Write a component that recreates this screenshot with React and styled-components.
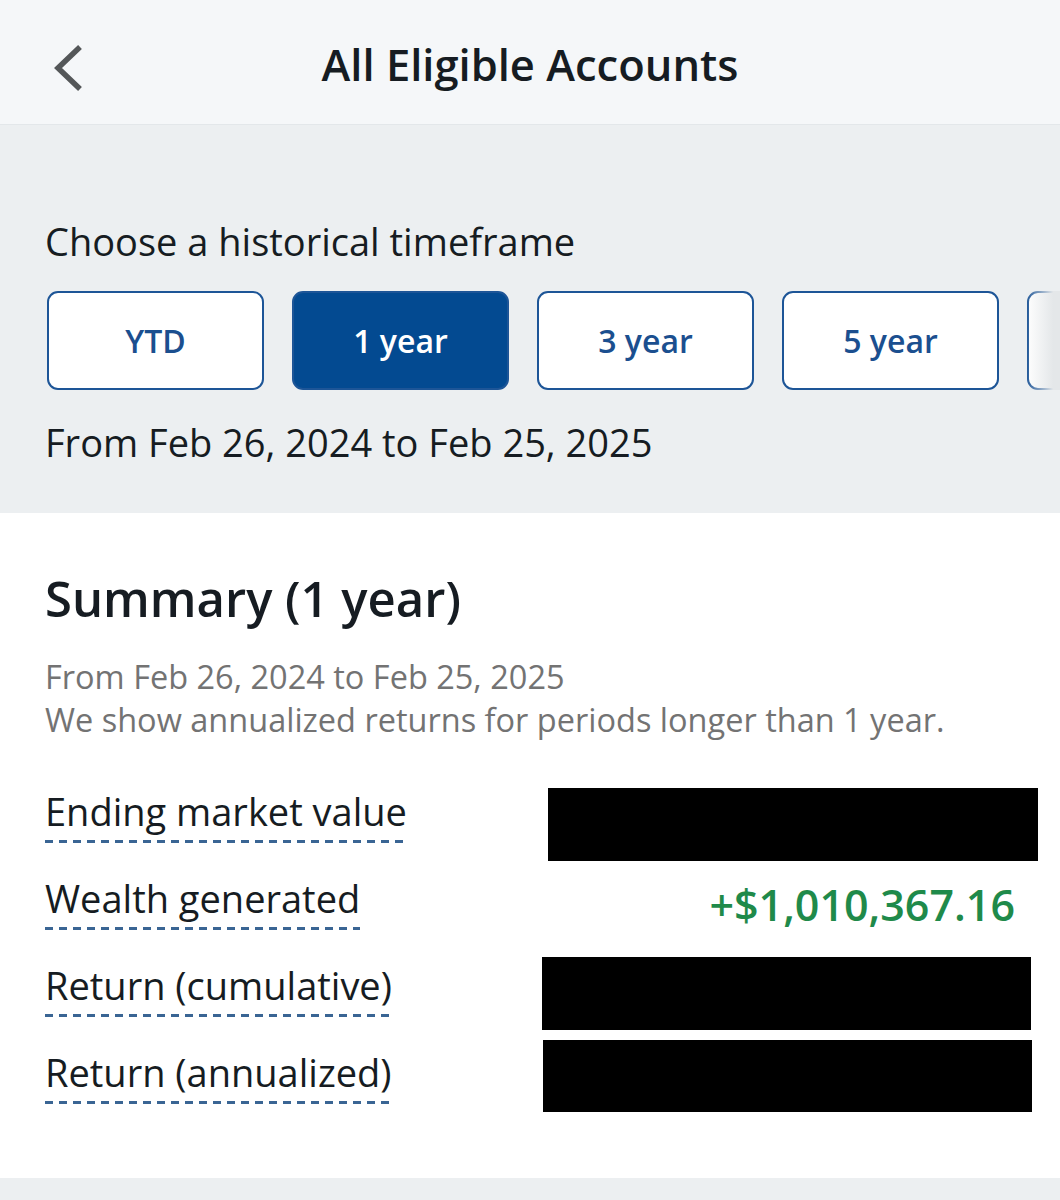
import React, { useState } from "react";
import styled, { createGlobalStyle } from "styled-components";

const GlobalStyle = createGlobalStyle`
  html, body {
    margin: 0;
    padding: 0;
    background: #eceff1;
    font-family: "Open Sans", "Noto Sans", sans-serif;
    color: #161c22;
  }
`;

// STYLED COMPONENTS
const Page = styled.div`
  width: 1060px;
  min-height: 1200px;
  background: #eceff1;
`;
const Header = styled.header`
  height: 125px;
  background: #f5f7f9;
  display: flex;
  align-items: center;
  justify-content: center;
  position: relative;
  border-bottom: 1px solid #e3e7ea;
  box-sizing: border-box;
`;
const BackButton = styled.button`
  position: absolute;
  left: 44px;
  top: 38px;
  width: 48px;
  height: 60px;
  border: none;
  background: none;
  padding: 0;
  cursor: pointer;
`;
const HeaderTitle = styled.h1`
  margin: 0;
  font-size: 43.5px;
  font-weight: 600;
  color: #161c22;
  transform: translateY(2px);
`;
const TimeframePanel = styled.section`
  padding: 92px 0 41px 45px;
`;
const Prompt = styled.p`
  margin: 0 0 26px;
  font-size: 38px;
  line-height: 48px;
  color: #161c22;
`;
const Scroller = styled.div`
  position: relative;
  overflow: hidden;
  margin-left: 2px;
`;
const Fade = styled.div`
  position: absolute;
  right: 0;
  top: 0;
  bottom: 0;
  width: 34px;
  background: linear-gradient(to right, rgba(236, 239, 241, 0), #e4e7e9 80%);
`;
const Pills = styled.div`
  display: flex;
  gap: 28px;
`;
const Pill = styled.button`
  flex: 0 0 auto;
  width: 217px;
  height: 99px;
  box-sizing: border-box;
  border-radius: 11px;
  border: 2.5px solid #1d5597;
  background: ${(p) => (p.$active ? "#034a91" : "#ffffff")};
  color: ${(p) => (p.$active ? "#ffffff" : "#1b4f8f")};
  font-family: "Open Sans", sans-serif;
  font-size: 32px;
  font-weight: 600;
  cursor: pointer;
  padding: 0;
`;
const RangeText = styled.p`
  margin: 22px 0 0;
  font-size: 38px;
  line-height: 60px;
  color: #161c22;
`;
const SummaryCard = styled.section`
  background: #ffffff;
  padding: 55px 22px 48px 45px;
  height: 665px;
  box-sizing: border-box;
`;
const SummaryTitle = styled.h2`
  margin: 0 0 27px;
  font-size: 49px;
  line-height: 60px;
  font-weight: 600;
  color: #161c22;
`;
const Note = styled.p`
  margin: 0;
  font-size: 32.5px;
  line-height: 43px;
  color: #737373;
`;
const Rows = styled.div`
  margin-top: 41px;
  display: flex;
  flex-direction: column;
`;
const Row = styled.div`
  display: flex;
  align-items: center;
  justify-content: space-between;
  height: 87px;
`;
const Label = styled.span`
  font-size: 38px;
  line-height: 44px;
  color: #161c22;
  background-image: linear-gradient(to right, #3a6594 60%, transparent 60%);
  background-size: 14px 3px;
  background-repeat: repeat-x;
  background-position: 0 100%;
  padding-bottom: 10px;
  transform: translateY(-10px);
`;
const Gain = styled.span`
  font-size: 43px;
  font-weight: 600;
  color: #1f8a4a;
  margin-right: 23px;
  transform: translateY(-8px);
`;
const Redacted = styled.div`
  background: #000;
  width: ${(p) => p.$w}px;
  height: ${(p) => p.$h}px;
  margin-right: ${(p) => p.$mr}px;
  transform: translateY(${(p) => p.$dy}px);
`;

const timeframes = ["YTD", "1 year", "3 year", "5 year", "10 year"];

function Chevron() {
  return (
    <svg width="48" height="60" viewBox="0 0 48 60">
      <path
        d="M36 9 L14 30 L36 51"
        fill="none"
        stroke="#545759"
        strokeWidth="5.5"
        strokeLinecap="butt"
        strokeLinejoin="miter"
      />
    </svg>
  );
}

export default function App() {
  const [selected, setSelected] = useState("1 year");

  return (
    <Page>
      <GlobalStyle />
      <Header>
        <BackButton aria-label="Back">
          <Chevron />
        </BackButton>
        <HeaderTitle>All Eligible Accounts</HeaderTitle>
      </Header>

      <TimeframePanel>
        <Prompt>Choose a historical timeframe</Prompt>
        <Scroller>
          <Pills>
            {timeframes.map((t) => (
              <Pill
                key={t}
                $active={t === selected}
                onClick={() => setSelected(t)}
              >
                {t}
              </Pill>
            ))}
          </Pills>
          <Fade />
        </Scroller>
        <RangeText>From Feb 26, 2024 to Feb 25, 2025</RangeText>
      </TimeframePanel>

      <SummaryCard>
        <SummaryTitle>Summary (1 year)</SummaryTitle>
        <Note>From Feb 26, 2024 to Feb 25, 2025</Note>
        <Note>We show annualized returns for periods longer than 1 year.</Note>
        <Rows>
          <Row>
            <Label>Ending market value</Label>
            <Redacted $w={490} $h={73} $mr={0} $dy={-1} />
          </Row>
          <Row>
            <Label>Wealth generated</Label>
            <Gain>+$1,010,367.16</Gain>
          </Row>
          <Row>
            <Label>Return (cumulative)</Label>
            <Redacted $w={489} $h={73} $mr={7} $dy={-6} />
          </Row>
          <Row>
            <Label>Return (annualized)</Label>
            <Redacted $w={489} $h={72} $mr={6} $dy={-11} />
          </Row>
        </Rows>
      </SummaryCard>
    </Page>
  );
}
